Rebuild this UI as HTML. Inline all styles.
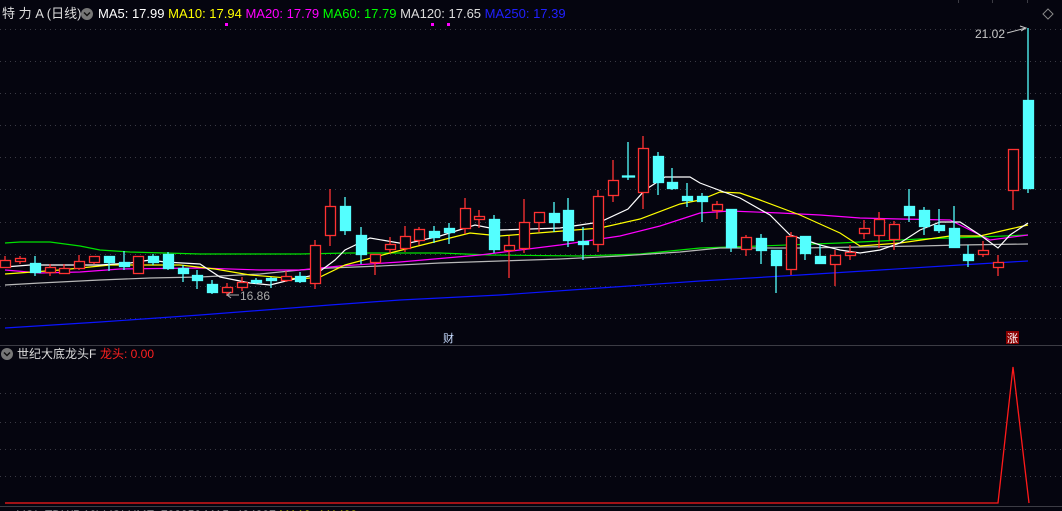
<!DOCTYPE html>
<html><head><meta charset="utf-8"><style>
html,body{margin:0;padding:0;background:#05050f;width:1062px;height:511px;overflow:hidden}
svg{display:block}
text{font-family:"Liberation Sans","Noto Sans CJK SC",sans-serif}
</style></head><body>
<svg width="1062" height="511" viewBox="0 0 1062 511" xmlns="http://www.w3.org/2000/svg">
<rect width="1062" height="511" fill="#05050f"/>
<g stroke="#3a3a44" stroke-width="1" stroke-dasharray="1,4">
<line x1="0" y1="29.5" x2="1062" y2="29.5"/><line x1="0" y1="61.5" x2="1062" y2="61.5"/>
<line x1="0" y1="93.5" x2="1062" y2="93.5"/><line x1="0" y1="125.5" x2="1062" y2="125.5"/>
<line x1="0" y1="157.5" x2="1062" y2="157.5"/><line x1="0" y1="189.5" x2="1062" y2="189.5"/>
<line x1="0" y1="222.5" x2="1062" y2="222.5"/><line x1="0" y1="254.5" x2="1062" y2="254.5"/>
<line x1="0" y1="286.5" x2="1062" y2="286.5"/><line x1="0" y1="318.5" x2="1062" y2="318.5"/>
<line x1="0" y1="393.5" x2="1062" y2="393.5"/><line x1="0" y1="422.5" x2="1062" y2="422.5"/>
<line x1="0" y1="449.5" x2="1062" y2="449.5"/><line x1="0" y1="476.5" x2="1062" y2="476.5"/>
</g>
<line x1="0" y1="345.5" x2="1062" y2="345.5" stroke="#3c3c44"/>
<line x1="0" y1="506.5" x2="1062" y2="506.5" stroke="#3c3c44"/>
<g stroke="#3c3c44"><line x1="958.5" y1="0" x2="958.5" y2="3"/><line x1="992.5" y1="0" x2="992.5" y2="3"/><line x1="1027.5" y1="0" x2="1027.5" y2="3"/></g>

<g fill="none" stroke-width="1.2">
<polyline stroke="#0a14ff" points="5,328 100,322 200,315 330,305 400,300 500,295 600,288 700,281 800,275 880,270 960,265 1028,261"/>
<polyline stroke="#00e000" points="5,243 20,242 50,242 80,246 100,250 130,252 200,254 300,254 350,253 440,253 490,255 580,256 640,254 700,248 760,246 840,243 920,239 980,237 1028,235"/>
<polyline stroke="#b8b8b8" points="5,285 40,283 100,280 150,278 200,277 260,274 300,270 330,268 380,266 440,263 500,261 560,259 620,256 680,252 720,248 800,248 860,247 920,246 960,245 1028,244"/>
<polyline stroke="#ff00ff" points="5,270 40,273 80,272 120,269 200,268 260,270 300,270 340,266 400,262 480,255 560,245 620,236 660,226 700,213 730,211 780,213 820,215 860,218 900,219 950,220 990,240 1028,235"/>
<polyline stroke="#ffff00" points="5,274 60,270 110,265 180,265 215,269 250,275 300,279 320,277 345,265 390,253 470,233 500,236 600,228 640,219 680,204 700,200 720,192 740,193 760,200 800,215 840,233 860,246 900,243 950,236 980,236 1010,229 1028,225"/>
<polyline stroke="#ffffff" points="5,267 30,265 100,265 130,263 150,260 165,262 200,264 220,277 250,283 270,285 290,280 315,275 335,260 345,250 370,238 405,244 440,236 475,225 500,230 560,228 600,222 628,209 645,190 665,177 690,177 700,183 740,198 770,215 790,235 820,245 840,250 860,253 880,250 900,243 920,230 940,222 960,222 980,235 998,248 1010,235 1028,223"/>
</g>

<g stroke-width="1.3">
<g stroke="#ff3232" fill="#05050f">
<line x1="5" y1="256" x2="5" y2="267"/><rect x="0.5" y="260.5" width="10" height="7"/>
<line x1="20" y1="256" x2="20" y2="264"/><rect x="15.5" y="258.5" width="10" height="3"/>
<line x1="50" y1="264" x2="50" y2="276"/><rect x="45.5" y="267.5" width="10" height="5"/>
<line x1="64" y1="264" x2="64" y2="274"/><rect x="59.5" y="268.5" width="10" height="5"/>
<line x1="79" y1="255" x2="79" y2="270"/><rect x="74.5" y="261.5" width="10" height="7"/>
<line x1="94" y1="256" x2="94" y2="264"/><rect x="89.5" y="256.5" width="10" height="6"/>
<rect x="133.5" y="256.5" width="10" height="17"/>
<line x1="227" y1="283" x2="227" y2="296"/><rect x="222.5" y="287.5" width="10" height="5"/>
<line x1="242" y1="277" x2="242" y2="291"/><rect x="237.5" y="282.5" width="10" height="5"/>
<line x1="286" y1="271" x2="286" y2="282"/><rect x="281.5" y="276.5" width="10" height="4"/>
<line x1="315" y1="240" x2="315" y2="289"/><rect x="310.5" y="245.5" width="10" height="38"/>
<line x1="330" y1="189" x2="330" y2="246"/><rect x="325.5" y="206.5" width="10" height="29"/>
<line x1="375" y1="254" x2="375" y2="275"/><rect x="370.5" y="254.5" width="10" height="8"/>
<line x1="390" y1="237" x2="390" y2="253"/><rect x="385.5" y="244.5" width="10" height="5"/>
<line x1="405" y1="226" x2="405" y2="252"/><rect x="400.5" y="236.5" width="10" height="12"/>
<line x1="419" y1="227" x2="419" y2="245"/><rect x="414.5" y="229.5" width="10" height="11"/>
<line x1="465" y1="198" x2="465" y2="234"/><rect x="460.5" y="208.5" width="10" height="20"/>
<line x1="479" y1="210" x2="479" y2="228"/><rect x="474.5" y="216.5" width="10" height="3"/>
<line x1="509" y1="236" x2="509" y2="278"/><rect x="504.5" y="245.5" width="10" height="5"/>
<line x1="524" y1="199" x2="524" y2="253"/><rect x="519.5" y="222.5" width="10" height="26"/>
<line x1="539" y1="212" x2="539" y2="232"/><rect x="534.5" y="212.5" width="10" height="10"/>
<line x1="598" y1="190" x2="598" y2="252"/><rect x="593.5" y="196.5" width="10" height="48"/>
<line x1="613" y1="160" x2="613" y2="202"/><rect x="608.5" y="180.5" width="10" height="15"/>
<line x1="643" y1="136" x2="643" y2="209"/><rect x="638.5" y="148.5" width="10" height="44"/>
<line x1="717" y1="201" x2="717" y2="219"/><rect x="712.5" y="204.5" width="10" height="6"/>
<line x1="746" y1="235" x2="746" y2="256"/><rect x="741.5" y="237.5" width="10" height="12"/>
<line x1="791" y1="232" x2="791" y2="275"/><rect x="786.5" y="236.5" width="10" height="33"/>
<line x1="835" y1="250" x2="835" y2="286"/><rect x="830.5" y="255.5" width="10" height="9"/>
<line x1="850" y1="245" x2="850" y2="260"/><rect x="845.5" y="252.5" width="10" height="3"/>
<line x1="864" y1="220" x2="864" y2="239"/><rect x="859.5" y="228.5" width="10" height="5"/>
<line x1="879" y1="212" x2="879" y2="248"/><rect x="874.5" y="219.5" width="10" height="16"/>
<line x1="894" y1="221" x2="894" y2="250"/><rect x="889.5" y="224.5" width="10" height="15"/>
<line x1="983" y1="241" x2="983" y2="257"/><rect x="978.5" y="250.5" width="10" height="4"/>
<line x1="998" y1="255" x2="998" y2="276"/><rect x="993.5" y="262.5" width="10" height="5"/>
<line x1="1013" y1="149" x2="1013" y2="210"/><rect x="1008.5" y="149.5" width="10" height="41"/>
</g>
<g stroke="#54ffff" fill="#54ffff">
<line x1="35" y1="256" x2="35" y2="276"/><rect x="30.5" y="263.5" width="10" height="9"/>
<line x1="109" y1="256" x2="109" y2="271"/><rect x="104.5" y="256.5" width="10" height="6"/>
<line x1="124" y1="251" x2="124" y2="270"/><rect x="119.5" y="262.5" width="10" height="4"/>
<line x1="153" y1="254" x2="153" y2="265"/><rect x="148.5" y="256.5" width="10" height="6"/>
<line x1="168" y1="252" x2="168" y2="270"/><rect x="163.5" y="254.5" width="10" height="14"/>
<line x1="183" y1="265" x2="183" y2="282"/><rect x="178.5" y="268.5" width="10" height="5"/>
<line x1="197" y1="270" x2="197" y2="289"/><rect x="192.5" y="275.5" width="10" height="5"/>
<line x1="212" y1="280" x2="212" y2="294"/><rect x="207.5" y="284.5" width="10" height="8"/>
<line x1="256" y1="278" x2="256" y2="284"/><rect x="251.5" y="280.5" width="10" height="2"/>
<line x1="271" y1="277" x2="271" y2="288"/><rect x="266.5" y="278.5" width="10" height="2"/>
<line x1="300" y1="272" x2="300" y2="283"/><rect x="295.5" y="276.5" width="10" height="5"/>
<line x1="345" y1="197" x2="345" y2="235"/><rect x="340.5" y="206.5" width="10" height="24"/>
<line x1="361" y1="227" x2="361" y2="264"/><rect x="356.5" y="235.5" width="10" height="19"/>
<line x1="434" y1="226" x2="434" y2="243"/><rect x="429.5" y="231.5" width="10" height="6"/>
<line x1="449" y1="223" x2="449" y2="244"/><rect x="444.5" y="228.5" width="10" height="4"/>
<line x1="494" y1="215" x2="494" y2="253"/><rect x="489.5" y="219.5" width="10" height="30"/>
<line x1="554" y1="202" x2="554" y2="232"/><rect x="549.5" y="213.5" width="10" height="9"/>
<line x1="568" y1="198" x2="568" y2="247"/><rect x="563.5" y="210.5" width="10" height="30"/>
<line x1="583" y1="227" x2="583" y2="260"/><rect x="578.5" y="241.5" width="10" height="3"/>
<line x1="628" y1="142" x2="628" y2="180"/><rect x="622.5" y="176" width="12" height="1"/>
<line x1="658" y1="152" x2="658" y2="195"/><rect x="653.5" y="156.5" width="10" height="26"/>
<line x1="672" y1="168" x2="672" y2="190"/><rect x="667.5" y="182.5" width="10" height="6"/>
<line x1="687" y1="183" x2="687" y2="207"/><rect x="682.5" y="196.5" width="10" height="4"/>
<line x1="702" y1="193" x2="702" y2="222"/><rect x="697.5" y="196.5" width="10" height="5"/>
<line x1="731" y1="209" x2="731" y2="252"/><rect x="726.5" y="209.5" width="10" height="38"/>
<line x1="761" y1="234" x2="761" y2="264"/><rect x="756.5" y="238.5" width="10" height="12"/>
<line x1="776" y1="250" x2="776" y2="293"/><rect x="771.5" y="250.5" width="10" height="15"/>
<line x1="805" y1="236" x2="805" y2="260"/><rect x="800.5" y="236.5" width="10" height="17"/>
<line x1="820" y1="245" x2="820" y2="264"/><rect x="815.5" y="256.5" width="10" height="7"/>
<line x1="909" y1="189" x2="909" y2="222"/><rect x="904.5" y="206.5" width="10" height="9"/>
<line x1="924" y1="207" x2="924" y2="235"/><rect x="919.5" y="210.5" width="10" height="16"/>
<line x1="939" y1="209" x2="939" y2="233"/><rect x="934.5" y="225.5" width="10" height="5"/>
<line x1="954" y1="206" x2="954" y2="248"/><rect x="949.5" y="228.5" width="10" height="19"/>
<line x1="968" y1="245" x2="968" y2="267"/><rect x="963.5" y="254.5" width="10" height="6"/>
<line x1="1028" y1="28" x2="1028" y2="193"/><rect x="1023.5" y="100.5" width="10" height="88"/>
</g>
</g>

<text x="975" y="38" font-size="12" fill="#c8c8c8">21.02</text>
<path d="M1007,33 L1026,28 M1020,26 L1026,28 L1021,31" stroke="#c8c8c8" fill="none"/>
<path d="M227,295 L239,295 M231,292 L227,295 L231,298" stroke="#aaaaaa" fill="none"/>
<text x="240" y="300" font-size="12" fill="#aaaaaa">16.86</text>
<rect x="225" y="23" width="3" height="3" fill="#ff00ff"/>
<rect x="431" y="23" width="3" height="3" fill="#ff00ff"/>
<rect x="447" y="23" width="3" height="3" fill="#ff00ff"/>
<text x="443" y="342" font-size="11" fill="#c8dcff">财</text>
<rect x="1006" y="331" width="13" height="13" fill="#8a0000"/>
<text x="1007" y="342" font-size="11" fill="#ffffff">涨</text>
<path d="M1048,9 L1053,14 L1048,19 L1043,14 Z" fill="none" stroke="#888" />

<text x="2" y="18" font-size="13" fill="#dcdcdc">特 力 A (日线)</text>
<circle cx="87" cy="14" r="6" fill="#777"/>
<path d="M84,12.5 L87,15.5 L90,12.5" stroke="#111" stroke-width="1.5" fill="none"/>
<text x="98" y="18" font-size="13"><tspan fill="#ffffff">MA5: 17.99 </tspan><tspan fill="#ffff00">MA10: 17.94 </tspan><tspan fill="#ff00ff">MA20: 17.79 </tspan><tspan fill="#00ff00">MA60: 17.79 </tspan><tspan fill="#dcdcdc">MA120: 17.65 </tspan><tspan fill="#2020ff">MA250: 17.39</tspan></text>

<circle cx="7" cy="354" r="6" fill="#777"/>
<path d="M4,352.5 L7,355.5 L10,352.5" stroke="#111" stroke-width="1.5" fill="none"/>
<text x="17" y="358" font-size="12" fill="#dcdcdc">世纪大底龙头F</text>
<text x="100" y="358" font-size="12" fill="#ff2020">龙头: 0.00</text>
<polyline points="5,503 998,503 1013,367 1029,503" fill="none" stroke="#ff1a1a" stroke-width="1.3"/>
<text x="17" y="519" font-size="12" fill="#dcdcdc">VOL-TDX(5,10) VOLUME: 793950 MA5: 424397 <tspan fill="#ffff00">MA10: 441499</tspan></text>
</svg>
</body></html>
